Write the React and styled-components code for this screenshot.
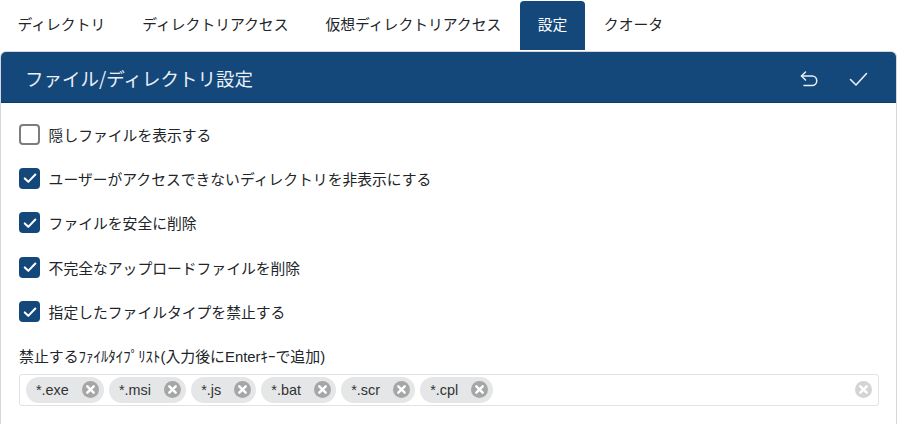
import React from "react";
import styled, { createGlobalStyle } from "styled-components";

const GlobalStyle = createGlobalStyle`
    html, body {
        margin:0;
        padding:0;
        background:#fff;
        overflow:hidden;
    }
    body {
        font-family:"Noto Sans CJK JP", "Liberation Sans", sans-serif;
        color:#212529;
    }
`;

const Page = styled.div`
    width:897px;
    height:424px;
    overflow:hidden;
`;

const Tabs = styled.div`
    display:flex;
    height:50px;
    margin-left:-1px;
    padding-top:1px;
    box-sizing:border-box;
`;

const Tab = styled.div`
    padding:0 ${props => props.$pad || 18.5}px;
    height:49px;
    line-height:46px;
    font-size:14.8px;
    white-space:nowrap;
    border-radius:4px 4px 0 0;
    background:${props => props.$active ? "#14477a" : "transparent"};
    color:${props => props.$active ? "#fff" : "#212529"};
`;

const Panel = styled.div`
    margin-top:1px;
    border:1px solid #d5d7da;
    border-bottom:none;
    border-radius:6px 6px 0 0;
    height:373px;
    box-sizing:border-box;
`;

const PanelHeader = styled.div`
    height:51px;
    background:#14477a;
    border-radius:5px 5px 0 0;
    border-bottom:1px solid #0f3a66;
    box-sizing:border-box;
    display:flex;
    align-items:center;
    justify-content:space-between;
    padding:0 28px 0 24px;
    color:#e9eff5;
`;

const Title = styled.div`
    font-size:18.5px;
    line-height:28px;
    margin-top:1px;
    white-space:nowrap;
`;

const HeaderActions = styled.div`
    display:flex;
    gap:31px;
    align-items:center;
    margin-top:4px;
`;

const PanelBody = styled.div`
    padding:20px 17px 0 18px;
`;

const CheckRow = styled.div`
    display:flex;
    align-items:center;
    gap:8.6px;
    height:22px;
    margin-bottom:22.4px;
    font-size:14.8px;
    white-space:nowrap;
`;

const Box = styled.div`
    width:21px;
    height:21px;
    box-sizing:border-box;
    border-radius:4px;
    display:flex;
    align-items:center;
    justify-content:center;
    background:${props => props.$checked ? "#14477a" : "#fff"};
    border:${props => props.$checked ? "none" : "2px solid #7d7d7d"};
`;

const FieldLabel = styled.div`
    font-size:14.9px;
    line-height:20px;
    margin-top:24.4px;
    margin-bottom:7px;
    white-space:nowrap;
    font-family:"Liberation Sans", "Noto Sans CJK JP", sans-serif;
`;

const TagInput = styled.div`
    height:32px;
    box-sizing:border-box;
    border:1px solid #e1e3e6;
    border-radius:3px;
    display:flex;
    align-items:center;
    padding:0 5px 0 6px;
    gap:5.2px;
`;

const Chip = styled.div`
    display:flex;
    align-items:center;
    height:26px;
    box-sizing:border-box;
    padding:0 5px 0 10px;
    border-radius:13px;
    background:#e4e6e7;
    font-family:"Liberation Sans", sans-serif;
    font-size:14.4px;
    color:#333;
    gap:13px;
`;

const ClearSlot = styled.div`
    margin-left:auto;
    display:flex;
    padding-right:1px;
`;

const CloseDot = ({ color = "#a6a6a6" }) => (
    <svg width="17" height="17" viewBox="0 0 17 17">
        <circle cx="8.5" cy="8.5" r="8.5" fill={color} />
        <path d="M5.3 5.3l6.4 6.4M11.7 5.3l-6.4 6.4" stroke="#fff" strokeWidth="2.4" strokeLinecap="round" />
    </svg>
);

const Tick = () => (
    <svg width="16" height="16" viewBox="0 0 15 15" fill="none">
        <path d="M2.6 7.9l3.3 3.2 6.6-6.9" stroke="#fff" strokeWidth="1.9" strokeLinecap="round" strokeLinejoin="round" />
    </svg>
);

const tabs = [
    { label: "ディレクトリ" },
    { label: "ディレクトリアクセス" },
    { label: "仮想ディレクトリアクセス" },
    { label: "設定", active: true, pad: 18 },
    { label: "クオータ" },
];

const options = [
    { label: "隠しファイルを表示する", checked: false },
    { label: "ユーザーがアクセスできないディレクトリを非表示にする", checked: true },
    { label: "ファイルを安全に削除", checked: true },
    { label: "不完全なアップロードファイルを削除", checked: true },
    { label: "指定したファイルタイプを禁止する", checked: true },
];

const chips = ["*.exe", "*.msi", "*.js", "*.bat", "*.scr", "*.cpl"];

const App = () => (
    <Page>
        <GlobalStyle />
        <Tabs>
            {tabs.map(tab => (
                <Tab key={tab.label} $active={tab.active} $pad={tab.pad}>{tab.label}</Tab>
            ))}
        </Tabs>
        <Panel>
            <PanelHeader>
                <Title>ファイル/ディレクトリ設定</Title>
                <HeaderActions>
                    <svg width="18" height="18" viewBox="0 0 18 18" fill="none" stroke="#e9eff5" strokeWidth="1.5" strokeLinecap="round" strokeLinejoin="round">
                        <path d="M5.5 2L1.5 6l4 4" />
                        <path d="M1.5 6h10.5a4.5 4.5 0 0 1 0 9.5H4" />
                    </svg>
                    <svg width="19" height="18" viewBox="0 0 19 18" fill="none" stroke="#e9eff5" strokeWidth="1.6" strokeLinecap="round" strokeLinejoin="round">
                        <path d="M1.5 9.5l5.5 5.5L17.5 3.5" />
                    </svg>
                </HeaderActions>
            </PanelHeader>
            <PanelBody>
                {options.map(option => (
                    <CheckRow key={option.label}>
                        <Box $checked={option.checked}>{option.checked && <Tick />}</Box>
                        {option.label}
                    </CheckRow>
                ))}
                <FieldLabel>禁止するﾌｧｲﾙﾀｲﾌﾟﾘｽﾄ(入力後にEnterｷｰで追加)</FieldLabel>
                <TagInput>
                    {chips.map(chip => (
                        <Chip key={chip}>
                            {chip}
                            <CloseDot />
                        </Chip>
                    ))}
                    <ClearSlot><CloseDot color="#d4d4d4" /></ClearSlot>
                </TagInput>
            </PanelBody>
        </Panel>
    </Page>
);

export default App;
